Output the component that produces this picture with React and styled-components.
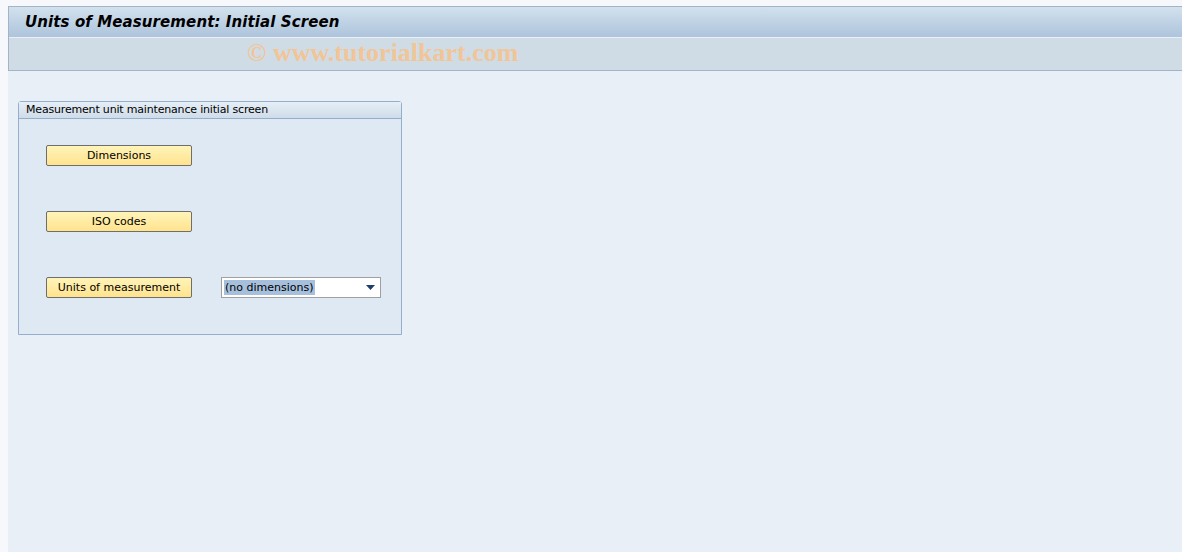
import styled, { createGlobalStyle } from "styled-components";

const Global = createGlobalStyle`
  html, body {
    margin: 0;
    padding: 0;
    background: #f6f8fb;
  }
  body {
    font-family: Tahoma, "DejaVu Sans", "Liberation Sans", sans-serif;
  }
`

const Page = styled.div`
  width: 1182px;
  height: 552px;
  padding-top: 6px;
  padding-left: 8px;
  box-sizing: border-box;
  display: flex;
  flex-direction: column;
  overflow: hidden;
`

const Header = styled.div`
  border-top: 1px solid #a3b3c8;
  border-left: 1px solid #a3b3c8;
  border-bottom: 1px solid #a3b3c8;
`

const TitleBar = styled.div`
  height: 30px;
  background: linear-gradient(#d2e1ed, #adc4dc);
  border-bottom: 1px solid #e9eff5;
  display: flex;
  align-items: center;
  padding-left: 16px;
`

const Title = styled.h1`
  margin: 0;
  font-family: "DejaVu Sans", sans-serif;
  font-size: 15px;
  font-weight: bold;
  font-style: italic;
  color: #000;
  letter-spacing: 0.1px;
`

const Toolbar = styled.div`
  height: 32px;
  background: #cfdce6;
  display: flex;
  align-items: center;
  padding-left: 238px;
`

const Watermark = styled.span`
  font-family: "Liberation Serif", serif;
  font-weight: bold;
  font-size: 26px;
  line-height: 26px;
  margin-top: -3px;
  color: #f2c597;
`

const Body = styled.div`
  flex: 1;
  background: #e8eff6;
  padding: 30px 0 0 10px;
`

const Group = styled.section`
  width: 382px;
  border: 1px solid #93afcc;
  border-radius: 3px 3px 0 0;
  background: #dfe9f3;
`

const GroupHead = styled.div`
  height: 16px;
  background: linear-gradient(#e6eef6, #cfdde9);
  border-bottom: 1px solid #93afcc;
  font-family: "DejaVu Sans", sans-serif;
  font-size: 11px;
  line-height: 16px;
  letter-spacing: -0.18px;
  padding-left: 7px;
  color: #000;
`

const GroupBody = styled.div`
  display: flex;
  flex-direction: column;
  gap: 45px;
  padding: 26px 0 36px 27px;
`

const Row = styled.div`
  display: flex;
  align-items: center;
  gap: 29px;
`

const Button = styled.button`
  width: 146px;
  height: 21px;
  box-sizing: border-box;
  border: 1px solid #6e6e6e;
  border-radius: 2px;
  background: linear-gradient(#fff4b8, #ffe38e);
  font-family: "DejaVu Sans", sans-serif;
  font-size: 11px;
  color: #000;
  padding: 0;
`

const Select = styled.div`
  width: 160px;
  height: 21px;
  box-sizing: border-box;
  border: 1px solid #a0a0a0;
  background: #fff;
  display: flex;
  align-items: center;
  justify-content: space-between;
  padding: 0 5px 0 2px;
`

const Selected = styled.span`
  background: #a6bfdc;
  font-family: "DejaVu Sans", sans-serif;
  font-size: 11px;
  color: #000;
  line-height: 15px;
  padding: 0 1px;
`

export default function App() {
  return (
    <>
      <Global />
      <Page>
        <Header>
          <TitleBar>
            <Title>Units of Measurement: Initial Screen</Title>
          </TitleBar>
          <Toolbar>
            <Watermark>© www.tutorialkart.com</Watermark>
          </Toolbar>
        </Header>
        <Body>
          <Group>
            <GroupHead>Measurement unit maintenance initial screen</GroupHead>
            <GroupBody>
              <Row>
                <Button>Dimensions</Button>
              </Row>
              <Row>
                <Button>ISO codes</Button>
              </Row>
              <Row>
                <Button>Units of measurement</Button>
                <Select>
                  <Selected>(no dimensions)</Selected>
                  <svg width="9" height="5" viewBox="0 0 9 5">
                    <path d="M0 0h9L4.5 5z" fill="#1f3d6b" />
                  </svg>
                </Select>
              </Row>
            </GroupBody>
          </Group>
        </Body>
      </Page>
    </>
  )
}
